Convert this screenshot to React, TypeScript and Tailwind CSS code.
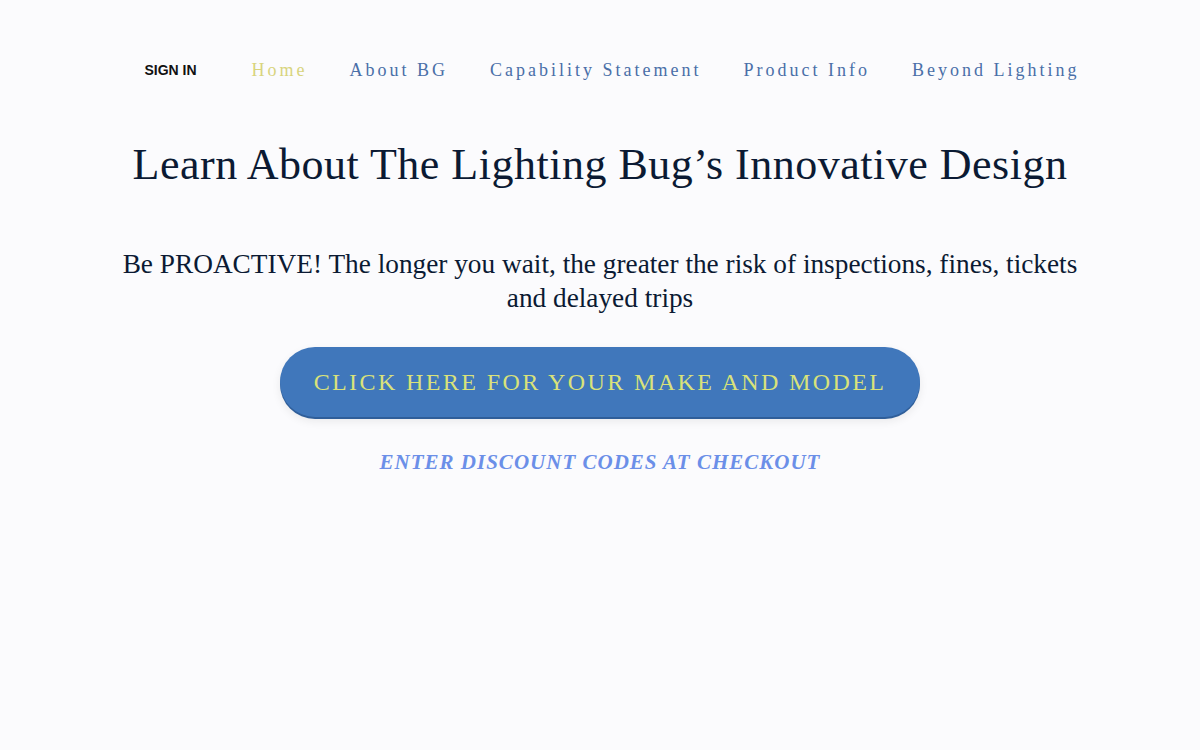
export default function App() {
  const links = ["About BG", "Capability Statement", "Product Info", "Beyond Lighting"];
  return (
    <div className="min-h-[750px] w-full bg-[#fbfbfd] font-['Liberation_Serif',serif]">
      <nav className="flex items-center justify-center pl-[24px] pt-[57px] pb-0 gap-[42px]">
        <a className="mr-[13px] font-['Liberation_Sans',Arial,sans-serif] text-[14px] font-bold text-[#111]">
          SIGN IN
        </a>
        <a className="text-[18px] tracking-[3px] text-[#d8d47e]">Home</a>
        {links.map((l) => (
          <a key={l} className="text-[18px] tracking-[3px] text-[#4a6fa8]">
            {l}
          </a>
        ))}
      </nav>
      <h1 className="mt-[55px] text-center text-[44px] leading-[1.2] tracking-[0.5px] text-[#0b1a33]">
        Learn About The Lighting Bug’s Innovative Design
      </h1>
      <p className="mx-auto mt-[55px] max-w-[980px] text-center text-[27.3px] leading-[34px] text-[#0b1a33]">
        Be PROACTIVE! The longer you wait, the greater the risk of inspections, fines, tickets and delayed trips
      </p>
      <div className="mt-[32px] flex justify-center">
        <button className="h-[70px] w-[640px] rounded-full bg-[#4077bb] text-[24px] tracking-[2.4px] text-[#d9e27a] shadow-[0_2px_0_#2f5e99,0_4px_10px_rgba(0,0,0,0.08)]">
          CLICK HERE FOR YOUR MAKE AND MODEL
        </button>
      </div>
      <p className="mt-[30px] text-center text-[21px] font-bold italic tracking-[1px] text-[#6b8fe8]">
        ENTER DISCOUNT CODES AT CHECKOUT
      </p>
    </div>
  );
}
